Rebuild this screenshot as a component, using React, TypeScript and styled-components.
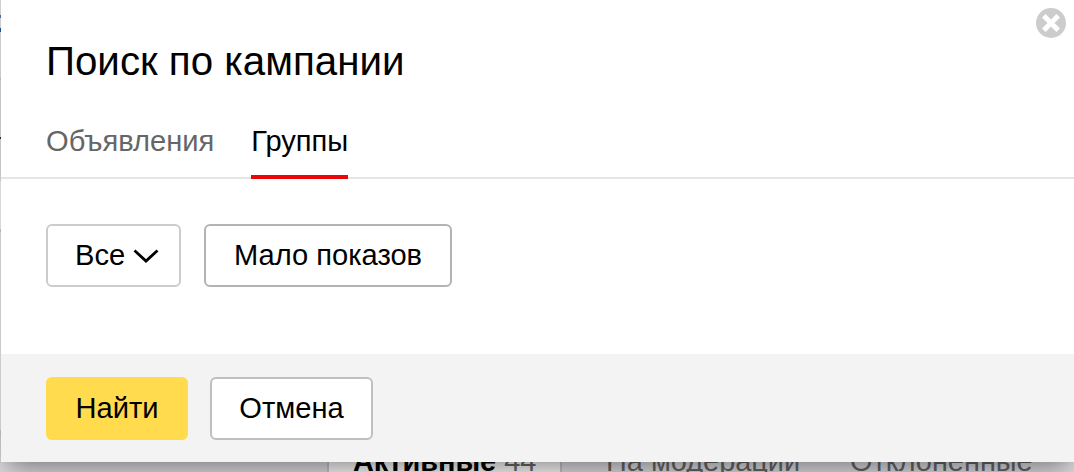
import { useState } from 'react';
import styled, { createGlobalStyle } from 'styled-components';

const GlobalStyle = createGlobalStyle`
  * {
    box-sizing: border-box;
  }

  body {
    margin: 0;
    overflow: hidden;
    font-family: 'Liberation Sans', Arial, sans-serif;
  }
`;

// Page under the dialog
const Page = styled.div`
  position: relative;
  display: flex;
  flex-direction: column;
  justify-content: flex-end;
  width: 1074px;
  height: 472px;
  overflow: hidden;
  background: #fff;
`;

const PageEdge = styled.div`
  flex: 1;
  width: 1px;
  background: linear-gradient(
    #f4f4f4 0 15px,
    #5c7cc4 15px 18px,
    #f4f4f4 18px 28px,
    #2858b4 28px 32px,
    #f0f0f0 32px 78px,
    #d8d8d8 78px 80px,
    #eaeaea 80px 137px,
    #333 137px 139px,
    #eaeaea 139px 181px,
    #fff 181px 229px,
    #d4d4d4 229px 232px,
    #efefef 232px 430px,
    #d4d4d4 430px
  );
`;

const StatusBar = styled.div`
  display: flex;
  height: 36px;
  padding-left: 327px;
  background: #dcdce0;
`;

const StatusTab = styled.div<{ $active?: boolean; $width: number; $indent: number }>`
  flex: none;
  width: ${(p) => p.$width}px;
  height: 60px;
  padding-left: ${(p) => p.$indent}px;
  border: solid ${(p) => (p.$active ? '#c4c4c8' : 'transparent')};
  border-width: 0 2px;
  background: ${(p) => (p.$active ? '#f8f8f8' : 'transparent')};
  color: #666;
  font-size: 28.9px;
  line-height: 50px;
  white-space: nowrap;

  b {
    color: #000;
  }
`;

// Dialog
const Dialog = styled.section`
  position: absolute;
  top: -40px;
  left: 1px;
  display: flex;
  flex-direction: column;
  width: 1074px;
  height: 502px;
  padding-top: 40px;
  background: #fff;
  box-shadow: 0 11px 26px -6px rgba(0, 0, 0, 0.48);
`;

const CloseButton = styled.button`
  position: absolute;
  top: 48px;
  right: 8px;
  width: 31px;
  height: 31px;
  padding: 0;
  border: 0;
  background: none;

  svg {
    display: block;
  }
`;

const Title = styled.h1`
  margin: 0;
  padding: 36px 45px 0;
  font-size: 40.3px;
  font-weight: 400;
  line-height: 51px;
`;

const Tabs = styled.div`
  display: flex;
  gap: 37px;
  height: 92px;
  padding: 0 45px;
  border-bottom: 2px solid #e5e5e5;
`;

const Tab = styled.button<{ $active: boolean }>`
  height: 92px;
  padding: 20px 0 0;
  border: 0;
  border-bottom: 4px solid ${(p) => (p.$active ? '#ea0606' : 'transparent')};
  background: none;
  color: ${(p) => (p.$active ? '#000' : '#666')};
  font-family: inherit;
  font-size: 29.1px;
  line-height: 34px;
`;

const Filters = styled.div`
  display: flex;
  flex: 1;
  align-items: flex-start;
  gap: 23px;
  padding: 45px 45px 0;
`;

const Footer = styled.footer`
  display: flex;
  gap: 22px;
  height: 108px;
  padding: 23px 45px 0;
  background: #f3f3f3;
`;

const Button = styled.button<{ $width: number; $border?: string; $primary?: boolean }>`
  display: flex;
  flex: none;
  align-items: center;
  justify-content: center;
  gap: 8px;
  width: ${(p) => p.$width}px;
  height: 63px;
  padding: 0 0 2px;
  border: ${(p) => (p.$primary ? '0' : `2px solid ${p.$border || '#b3b3b3'}`)};
  border-radius: 6px;
  background: ${(p) => (p.$primary ? '#ffdb4d' : '#fff')};
  color: #000;
  font-family: inherit;
  font-size: 29.1px;
  line-height: 34px;
`;

const SelectButton = styled(Button)`
  justify-content: flex-start;
  padding-left: 27px;

  svg {
    margin-top: 2px;
  }
`;

const TABS = ['Объявления', 'Группы'];

const App: React.FC = () => {
    const [activeTab, setActiveTab] = useState('Группы');

    return (
        <>
            <GlobalStyle />
            <Page>
                <PageEdge />
                <StatusBar>
                    <StatusTab $active $width={235} $indent={24}>
                        <b>Активные</b> 44
                    </StatusTab>
                    <StatusTab $width={244} $indent={42}>На модерации</StatusTab>
                    <StatusTab $width={260} $indent={42}>Отклоненные</StatusTab>
                </StatusBar>

                <Dialog>
                    <CloseButton aria-label="Закрыть">
                        <svg width="31" height="31" viewBox="0 0 31 31">
                            <circle cx="15" cy="15" r="15" fill="#ccc" />
                            <path d="M7.8 7.8l14.4 14.4M22.2 7.8L7.8 22.2" stroke="#fff" strokeWidth="5" />
                        </svg>
                    </CloseButton>
                    <Title>Поиск по кампании</Title>
                    <Tabs>
                        {TABS.map((tab) => (
                            <Tab key={tab} $active={tab === activeTab} onClick={() => setActiveTab(tab)}>
                                {tab}
                            </Tab>
                        ))}
                    </Tabs>
                    <Filters>
                        <SelectButton $width={135} $border="#ccc">
                            Все
                            <svg width="26" height="14" viewBox="0 0 26 14">
                                <path d="M1.5 1.5L13 12L24.5 1.5" fill="none" stroke="#000" strokeWidth="2.8" />
                            </svg>
                        </SelectButton>
                        <Button $width={248}>Мало показов</Button>
                    </Filters>
                    <Footer>
                        <Button $width={142} $primary>Найти</Button>
                        <Button $width={163} $border="#bfbfbf">Отмена</Button>
                    </Footer>
                </Dialog>
            </Page>
        </>
    );
};

export default App;
